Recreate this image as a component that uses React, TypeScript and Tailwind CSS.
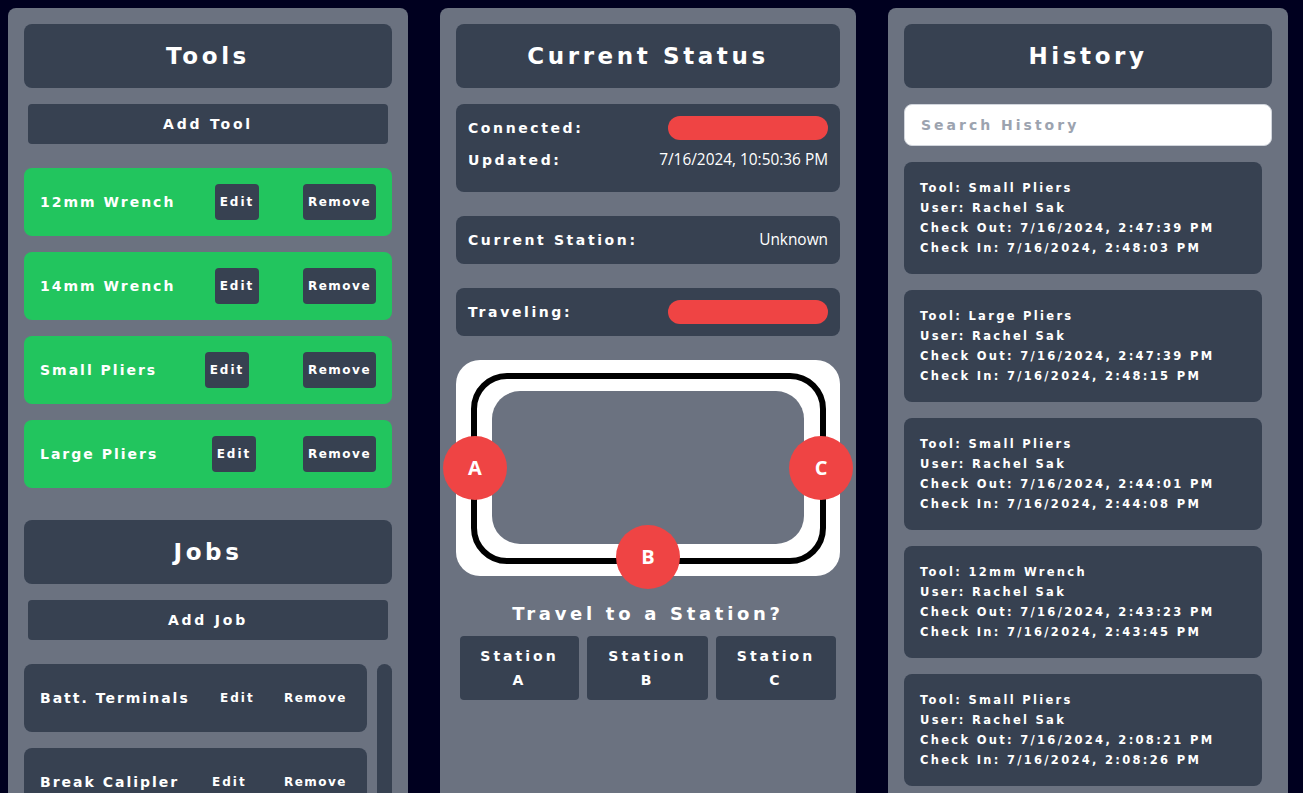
import React from 'react';

const wide = "font-['DejaVu_Sans',sans-serif]";

const tools = [
  { name: '12mm Wrench', nameWidth: 'w-[175px]' },
  { name: '14mm Wrench', nameWidth: 'w-[175px]' },
  { name: 'Small Pliers', nameWidth: 'w-[165px]' },
  { name: 'Large Pliers', nameWidth: 'w-[172px]' },
];

const jobs = [
  { name: 'Batt. Terminals', nameWidth: 'w-[180px]' },
  { name: 'Break Calipler', nameWidth: 'w-[172px]' },
];

const stations = [
  { label: 'A', width: 'w-[119px]' },
  { label: 'B', width: 'w-[121px]' },
  { label: 'C', width: 'w-[120px]' },
];

const history = [
  { tool: 'Small Pliers', out: '7/16/2024, 2:47:39 PM', in: '7/16/2024, 2:48:03 PM' },
  { tool: 'Large Pliers', out: '7/16/2024, 2:47:39 PM', in: '7/16/2024, 2:48:15 PM' },
  { tool: 'Small Pliers', out: '7/16/2024, 2:44:01 PM', in: '7/16/2024, 2:44:08 PM' },
  { tool: '12mm Wrench', out: '7/16/2024, 2:43:23 PM', in: '7/16/2024, 2:43:45 PM' },
  { tool: 'Small Pliers', out: '7/16/2024, 2:08:21 PM', in: '7/16/2024, 2:08:26 PM' },
];

function Heading({ children }: { children: React.ReactNode }) {
  return (
    <div className="flex h-16 shrink-0 items-center justify-center rounded-lg bg-[#374151] text-[23px] font-bold tracking-[3.6px] text-white">
      {children}
    </div>
  );
}

function AddButton({ children }: { children: React.ReactNode }) {
  return (
    <button className="mx-1 mt-4 h-10 shrink-0 rounded-sm bg-[#374151] text-[14px] font-bold tracking-[2.8px] text-white">
      {children}
    </button>
  );
}

function Circle({ label, className }: { label: string; className: string }) {
  return (
    <div
      className={`absolute flex h-16 w-16 items-center justify-center rounded-full bg-[#ef4444] font-['Open_Sans',sans-serif] text-xl font-bold text-white ${className}`}
    >
      {label}
    </div>
  );
}

export default function App() {
  return (
    <div className={`flex h-[793px] items-start gap-8 overflow-hidden bg-[#00001f] p-2 ${wide}`}>
      <div className="flex h-[900px] w-[400px] shrink-0 flex-col rounded-lg bg-[#6b7280] p-4">
        <Heading>Tools</Heading>
        <AddButton>Add Tool</AddButton>
        <div className="mt-6 flex shrink-0 flex-col gap-4">
          {tools.map((t) => (
            <div key={t.name} className="flex h-[68px] items-center rounded-lg bg-[#22c55e] px-4 text-white">
              <span className={`${t.nameWidth} text-[14px] font-bold tracking-[2px]`}>{t.name}</span>
              <button className="h-9 w-11 rounded bg-[#374151] text-[12px] font-bold tracking-[2px]">Edit</button>
              <button className="ml-auto h-9 w-[73px] rounded bg-[#374151] text-[12px] font-bold tracking-[1.5px]">
                Remove
              </button>
            </div>
          ))}
        </div>
        <div className="mt-8 flex shrink-0 flex-col">
          <Heading>Jobs</Heading>
        </div>
        <AddButton>Add Job</AddButton>
        <div className="mt-6 flex shrink-0 gap-2.5">
          <div className="flex w-[343px] flex-col gap-4">
            {jobs.map((j) => (
              <div key={j.name} className="flex h-[68px] shrink-0 items-center rounded-lg bg-[#374151] px-4 text-white">
                <span className={`${j.nameWidth} text-[14px] font-bold tracking-[2px]`}>{j.name}</span>
                <span className="text-[12px] font-bold tracking-[2px]">Edit</span>
                <span className="mr-1 ml-auto text-[12px] font-bold tracking-[1.5px]">Remove</span>
              </div>
            ))}
          </div>
          <div className="h-[200px] w-[15px] rounded-full bg-[#374151]" />
        </div>
      </div>

      <div className="flex h-[900px] w-[416px] shrink-0 flex-col rounded-lg bg-[#6b7280] p-4">
        <Heading>Current Status</Heading>
        <div className="mt-4 h-[88px] shrink-0 rounded-lg bg-[#374151] p-3 text-white">
          <div className="flex h-6 items-center justify-between">
            <span className="text-[14px] font-bold tracking-[2.6px]">Connected:</span>
            <div className="h-6 w-40 rounded-full bg-[#ef4444]" />
          </div>
          <div className="mt-2 flex h-6 items-center justify-between">
            <span className="text-[14px] font-bold tracking-[2.6px]">Updated:</span>
            <span className="font-['Open_Sans',sans-serif] text-[15.4px]">7/16/2024, 10:50:36 PM</span>
          </div>
        </div>
        <div className="mt-6 flex h-12 shrink-0 items-center justify-between rounded-lg bg-[#374151] px-3 text-white">
          <span className="text-[14px] font-bold tracking-[2.6px]">Current Station:</span>
          <span className="font-['Open_Sans',sans-serif] text-[15.4px]">Unknown</span>
        </div>
        <div className="mt-6 flex h-12 shrink-0 items-center justify-between rounded-lg bg-[#374151] px-3 text-white">
          <span className="text-[14px] font-bold tracking-[2.6px]">Traveling:</span>
          <div className="h-6 w-40 rounded-full bg-[#ef4444]" />
        </div>

        <div className="relative mt-6 h-[216px] shrink-0 rounded-3xl bg-white pt-[13px] pr-[14px] pb-3 pl-[15px]">
          <div className="h-full rounded-[36px] border-[6px] border-black pt-3 pr-4 pb-3.5 pl-[15px]">
            <div className="h-full rounded-[28px] bg-[#6b7280]" />
          </div>
          <Circle label="A" className="top-[76px] left-[-13px]" />
          <Circle label="B" className="top-[165px] left-[160px]" />
          <Circle label="C" className="top-[76px] left-[333px]" />
        </div>

        <div className="mt-6 h-7 shrink-0 text-center text-[18px] leading-7 font-bold tracking-[3.7px] text-white">
          Travel to a Station?
        </div>
        <div className="mx-1 mt-2 flex shrink-0 gap-2">
          {stations.map((s) => (
            <button key={s.label} className={`h-16 ${s.width} rounded bg-[#374151] text-[14px] leading-6 font-bold tracking-[3px] text-white`}>
              Station
              <br />
              {s.label}
            </button>
          ))}
        </div>
      </div>

      <div className="flex h-[900px] w-[400px] shrink-0 flex-col rounded-lg bg-[#6b7280] p-4">
        <Heading>History</Heading>
        <input
          placeholder="Search History"
          className="mt-4 h-[42px] shrink-0 rounded-lg border border-gray-300 bg-white px-4 text-[14px] font-bold tracking-[3px] outline-none placeholder:text-[#9ca3af]"
        />
        <div className="mt-4 flex w-[358px] flex-col gap-4">
          {history.map((h, i) => (
            <div key={i} className="h-28 shrink-0 rounded-lg bg-[#374151] p-4 text-[11.5px] leading-5 font-bold tracking-[2.3px] text-white">
              <div>Tool: {h.tool}</div>
              <div>User: Rachel Sak</div>
              <div>Check Out: {h.out}</div>
              <div>Check In: {h.in}</div>
            </div>
          ))}
        </div>
      </div>
    </div>
  );
}
